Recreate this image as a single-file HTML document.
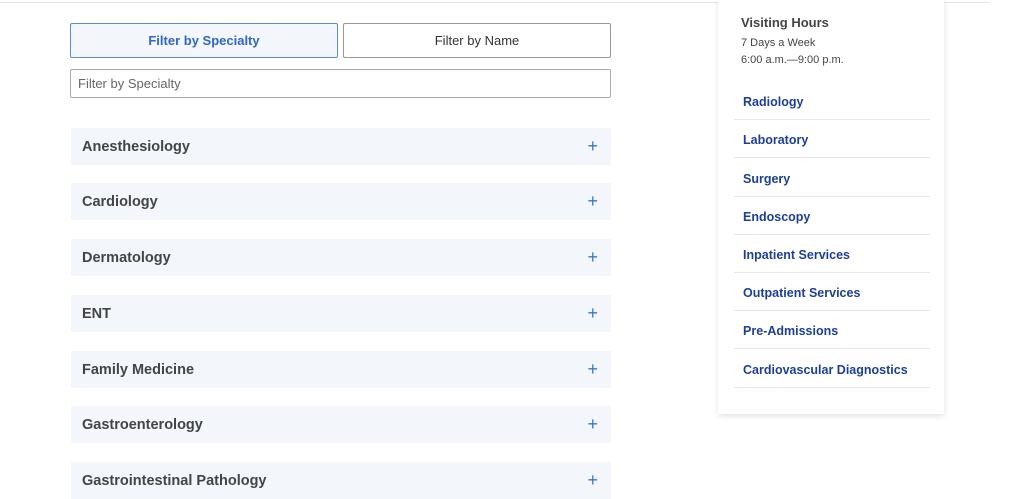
<!DOCTYPE html>
<html><head><style>
*{margin:0;padding:0;box-sizing:border-box}
body{width:1025px;height:484px;overflow:hidden;background:#fff;font-family:"Liberation Sans",sans-serif;position:relative}
.topline{position:absolute;left:0;top:2px;width:990px;height:1px;background:#e6e6e6}
.btn{position:absolute;top:23px;height:35px;border:1px solid #999;border-radius:2px;font-size:13px;display:flex;align-items:center;justify-content:center;color:#333}
.b1{left:70px;width:268px;background:#f3f6fb;border-color:#5b8bd6;color:#2f66c8;font-weight:bold}
.b2{left:343px;width:268px;background:#fff}
.inp{position:absolute;left:70px;top:69px;width:541px;height:29px;border:1px solid #aaa;border-radius:2px;font-size:13px;color:#666;padding:6px 7px}
.row{position:absolute;left:71px;width:540px;height:37px;background:#f3f6fb;font-weight:bold;font-size:14.5px;color:#444;padding:11px 11px}
.row span{position:absolute;right:13px;top:8px;color:#3a77c8;font-weight:normal;font-size:18px}
.card{position:absolute;left:718px;top:0;width:226px;height:414px;background:#fff;box-shadow:0 2px 6px rgba(0,0,0,.12)}
.card h3{position:absolute;left:23px;top:15px;font-size:13px;color:#444}
.card p{position:absolute;left:23px;font-size:11px;color:#444}
.link{position:absolute;left:16px;width:196px;height:38px;border-bottom:1px solid #e8e8e8;font-size:12.5px;font-weight:bold;color:#1d3f9a;padding:0 9px;line-height:40px}
</style></head><body>
<div class="topline"></div>
<div class="btn b1">Filter by Specialty</div>
<div class="btn b2">Filter by Name</div>
<div class="inp">Filter by Specialty</div>
<div class="row" style="top:128px">Anesthesiology<span>+</span></div>
<div class="row" style="top:183px">Cardiology<span>+</span></div>
<div class="row" style="top:239px">Dermatology<span>+</span></div>
<div class="row" style="top:295px">ENT<span>+</span></div>
<div class="row" style="top:351px">Family Medicine<span>+</span></div>
<div class="row" style="top:406px">Gastroenterology<span>+</span></div>
<div class="row" style="top:462px">Gastrointestinal Pathology<span>+</span></div>
<div class="card">
<h3>Visiting Hours</h3>
<p style="top:37px">7 Days a Week</p>
<p style="top:54px">6:00 a.m.—9:00 p.m.</p>
<div class="link" style="top:82px">Radiology</div>
<div class="link" style="top:120px">Laboratory</div>
<div class="link" style="top:159px">Surgery</div>
<div class="link" style="top:197px">Endoscopy</div>
<div class="link" style="top:235px">Inpatient Services</div>
<div class="link" style="top:273px">Outpatient Services</div>
<div class="link" style="top:311px">Pre-Admissions</div>
<div class="link" style="top:350px">Cardiovascular Diagnostics</div>
</div>
</body></html>
